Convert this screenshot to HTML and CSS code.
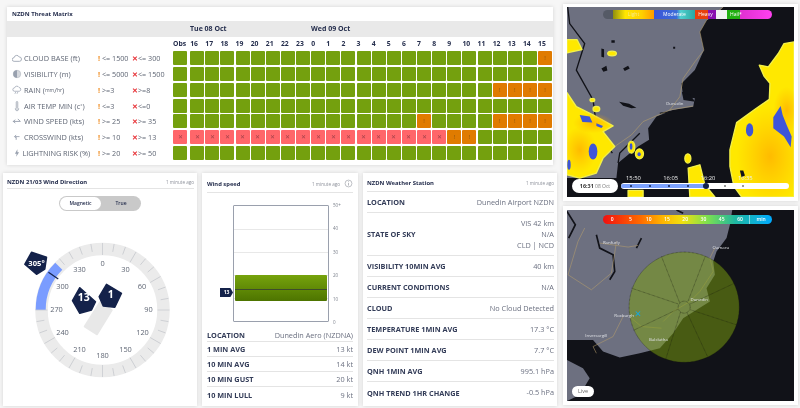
FILE: index.html
```html
<!DOCTYPE html>
<html lang="en">
<head>
<meta charset="utf-8">
<title>NZDN Dashboard</title>
<link rel="stylesheet" href="styles.css">
</head>
<body>
<div class="page">
  <div class="left">
    <section class="card threat">
      <h2 class="threat-title">NZDN Threat Matrix</h2>
      <div class="days"><span class="day-tue">Tue 08 Oct</span><span>Wed 09 Oct</span></div>
      <div class="matrix">
        <span class="h-blank"></span>
        <b>Obs</b><b>16</b><b>17</b><b>18</b><b>19</b><b>20</b><b>21</b><b>22</b><b>23</b><b>0</b><b>1</b><b>2</b><b>3</b><b>4</b><b>5</b><b>6</b><b>7</b><b>8</b><b>9</b><b>10</b><b>11</b><b>12</b><b>13</b><b>14</b><b>15</b>

        <span class="lbl"><svg class="ic" viewBox="0 0 12 12"><path d="M2.500 10a2.200 2.200 0 0 1 0-4.400A3.200 3.200 0 0 1 8.600 4.800 2.600 2.600 0 0 1 9 10z" fill="none" stroke="#98a0ae"/></svg>CLOUD BASE (ft)</span>
        <span class="w"><em>!</em> &lt;= 1500</span><span class="x"><em>✕</em>&lt;= 300</span>
        <i></i><i></i><i></i><i></i><i></i><i></i><i></i><i></i><i></i><i></i><i></i><i></i><i></i><i></i><i></i><i></i><i></i><i></i><i></i><i></i><i></i><i></i><i></i><i></i><i class="o">!</i>

        <span class="lbl"><svg class="ic" viewBox="0 0 12 12"><circle cx="6" cy="6" r="4.500" fill="#d5d8dd" stroke="#a8aeb8" stroke-width=".6"/><path d="M6 1.500a4.500 4.500 0 0 0 0 9z" fill="#98a0ae"/></svg>VISIBILITY (m)</span>
        <span class="w"><em>!</em> &lt;= 5000</span><span class="x"><em>✕</em>&lt;= 1500</span>
        <i></i><i></i><i></i><i></i><i></i><i></i><i></i><i></i><i></i><i></i><i></i><i></i><i></i><i></i><i></i><i></i><i></i><i></i><i></i><i></i><i></i><i></i><i></i><i></i><i></i>

        <span class="lbl"><svg class="ic" viewBox="0 0 12 12"><path d="M3 7.500a2 2 0 0 1 0-4A3 3 0 0 1 8.500 3a2.300 2.300 0 0 1 .3 4.500zM4.500 8.500l-1 2M7 8.500l-1 2" fill="none" stroke="#98a0ae" stroke-width=".9"/></svg>RAIN (<small>mm</small>/<small>hr</small>)</span>
        <span class="w"><em>!</em> &gt;=3</span><span class="x"><em>✕</em>&gt;=8</span>
        <i></i><i></i><i></i><i></i><i></i><i></i><i></i><i></i><i></i><i></i><i></i><i></i><i></i><i></i><i></i><i></i><i></i><i></i><i></i><i></i><i></i><i class="o">!</i><i class="o">!</i><i class="o">!</i><i class="o">!</i>

        <span class="lbl"><svg class="ic" viewBox="0 0 12 12"><path d="M5 1.500a1 1 0 0 1 2 0v6.500a2 2 0 1 1-2 0z" fill="#d5d8dd" stroke="#98a0ae" stroke-width=".7"/></svg>AIR TEMP MIN (c<sup>°</sup>)</span>
        <span class="w"><em>!</em> &lt;=3</span><span class="x"><em>✕</em>&lt;=0</span>
        <i></i><i></i><i></i><i></i><i></i><i></i><i></i><i></i><i></i><i></i><i></i><i></i><i></i><i></i><i></i><i></i><i></i><i></i><i></i><i></i><i></i><i></i><i></i><i></i><i></i>

        <span class="lbl"><svg class="ic" viewBox="0 0 12 12"><path d="M1 6.500h9M4 4.500 1.500 6.500 4 8.500M7 3.500l3 3" fill="none" stroke="#98a0ae" stroke-width="1.100"/></svg>WIND SPEED (kts)</span>
        <span class="w"><em>!</em> &gt;= 25</span><span class="x"><em>✕</em>&gt;= 35</span>
        <i></i><i></i><i></i><i></i><i></i><i></i><i></i><i></i><i></i><i></i><i></i><i></i><i></i><i></i><i></i><i></i><i class="o">!</i><i></i><i></i><i></i><i></i><i class="o">!</i><i class="o">!</i><i class="o">!</i><i class="o">!</i>

        <span class="lbl"><svg class="ic" viewBox="0 0 12 12"><path d="M3 5.500h6M5 3.500 3 5.500l2 2M5 5.500v4" fill="none" stroke="#98a0ae" stroke-width="1"/></svg>CROSSWIND (kts)</span>
        <span class="w"><em>!</em> &gt;= 10</span><span class="x"><em>✕</em>&gt;= 13</span>
        <i class="r">✕</i><i class="r">✕</i><i class="r">✕</i><i class="r">✕</i><i class="r">✕</i><i class="r">✕</i><i class="r">✕</i><i class="r">✕</i><i class="r">✕</i><i class="r">✕</i><i class="r">✕</i><i class="r">✕</i><i class="r">✕</i><i class="r">✕</i><i class="r">✕</i><i class="r">✕</i><i class="r">✕</i><i class="r">✕</i><i class="o">!</i><i class="o">!</i><i></i><i></i><i></i><i></i><i></i>

        <span class="lbl lbl-tight"><svg class="ic ic-tight" viewBox="0 0 12 12"><path d="M6.500 1.500 3.500 7h2l-.5 3.500L8.500 5h-2z" fill="#98a0ae"/></svg>LIGHTNING RISK (%)</span>
        <span class="w"><em>!</em> &gt;= 20</span><span class="x"><em>✕</em>&gt;= 50</span>
        <i></i><i></i><i></i><i></i><i></i><i></i><i></i><i></i><i></i><i></i><i></i><i></i><i></i><i></i><i></i><i></i><i></i><i></i><i></i><i></i><i></i><i></i><i></i><i></i><i></i>
      </div>
    </section>

    <div class="bottom">
      <section class="card dir">
        <header class="head"><h2>NZDN 21/03 Wind Direction</h2><span>1 minute ago</span></header>
        <div class="toggle"><span class="on">Magnetic</span><span class="off">True</span></div>
        <svg class="dial" viewBox="0 0 194 194" role="img" aria-label="Wind direction dial">
          <circle cx="97.500" cy="97" r="61" fill="none" stroke="#ebebeb" stroke-width="12.500"/>
          <path d="M35.700 97A61.800 61.800 0 0 1 53.800 53.300" fill="none" stroke="#7a9cff" stroke-width="10"/>
          <g stroke="#c9cbd0" stroke-width=".8">
            <line x1="97.500" y1="30" x2="97.500" y2="42"/>
            <line x1="97.500" y1="30" x2="97.500" y2="38" transform="rotate(10 97.500 97)"/>
            <line x1="97.500" y1="30" x2="97.500" y2="38" transform="rotate(20 97.500 97)"/>
            <line x1="97.500" y1="30" x2="97.500" y2="42" transform="rotate(30 97.500 97)"/>
            <line x1="97.500" y1="30" x2="97.500" y2="38" transform="rotate(40 97.500 97)"/>
            <line x1="97.500" y1="30" x2="97.500" y2="38" transform="rotate(50 97.500 97)"/>
            <line x1="97.500" y1="30" x2="97.500" y2="42" transform="rotate(60 97.500 97)"/>
            <line x1="97.500" y1="30" x2="97.500" y2="38" transform="rotate(70 97.500 97)"/>
            <line x1="97.500" y1="30" x2="97.500" y2="38" transform="rotate(80 97.500 97)"/>
            <line x1="97.500" y1="30" x2="97.500" y2="42" transform="rotate(90 97.500 97)"/>
            <line x1="97.500" y1="30" x2="97.500" y2="38" transform="rotate(100 97.500 97)"/>
            <line x1="97.500" y1="30" x2="97.500" y2="38" transform="rotate(110 97.500 97)"/>
            <line x1="97.500" y1="30" x2="97.500" y2="42" transform="rotate(120 97.500 97)"/>
            <line x1="97.500" y1="30" x2="97.500" y2="38" transform="rotate(130 97.500 97)"/>
            <line x1="97.500" y1="30" x2="97.500" y2="38" transform="rotate(140 97.500 97)"/>
            <line x1="97.500" y1="30" x2="97.500" y2="42" transform="rotate(150 97.500 97)"/>
            <line x1="97.500" y1="30" x2="97.500" y2="38" transform="rotate(160 97.500 97)"/>
            <line x1="97.500" y1="30" x2="97.500" y2="38" transform="rotate(170 97.500 97)"/>
            <line x1="97.500" y1="30" x2="97.500" y2="42" transform="rotate(180 97.500 97)"/>
            <line x1="97.500" y1="30" x2="97.500" y2="38" transform="rotate(190 97.500 97)"/>
            <line x1="97.500" y1="30" x2="97.500" y2="38" transform="rotate(200 97.500 97)"/>
            <line x1="97.500" y1="30" x2="97.500" y2="42" transform="rotate(210 97.500 97)"/>
            <line x1="97.500" y1="30" x2="97.500" y2="38" transform="rotate(220 97.500 97)"/>
            <line x1="97.500" y1="30" x2="97.500" y2="38" transform="rotate(230 97.500 97)"/>
            <line x1="97.500" y1="30" x2="97.500" y2="42" transform="rotate(240 97.500 97)"/>
            <line x1="97.500" y1="30" x2="97.500" y2="38" transform="rotate(250 97.500 97)"/>
            <line x1="97.500" y1="30" x2="97.500" y2="38" transform="rotate(260 97.500 97)"/>
            <line x1="97.500" y1="30" x2="97.500" y2="42" transform="rotate(270 97.500 97)"/>
            <line x1="97.500" y1="30" x2="97.500" y2="38" transform="rotate(320 97.500 97)"/>
            <line x1="97.500" y1="30" x2="97.500" y2="38" transform="rotate(330 97.500 97)"/>
            <line x1="97.500" y1="30" x2="97.500" y2="38" transform="rotate(340 97.500 97)"/>
            <line x1="97.500" y1="30" x2="97.500" y2="38" transform="rotate(350 97.500 97)"/>
          </g>
          <line x1="97.500" y1="31" x2="97.500" y2="43" stroke="#14224a" stroke-width="1.200" transform="rotate(305 97.500 97)"/>
          <g class="dial-num" text-anchor="middle">
            <text x="97.500" y="53">0</text><text x="120.500" y="59">30</text><text x="137" y="76">60</text><text x="143.500" y="99">90</text>
            <text x="137.500" y="122">120</text><text x="120.500" y="139">150</text><text x="97.500" y="144.500">180</text><text x="74.500" y="139">210</text>
            <text x="57.500" y="122">240</text><text x="51.500" y="99">270</text><text x="57.500" y="76">300</text><text x="74.500" y="59">330</text>
          </g>
          <path d="M79.500 113.500 92 121.500 107 97 95 89z" fill="#e8e8e8" stroke="#e8e8e8" stroke-width="1.500" stroke-linejoin="round"/>
          <path class="badge" d="M101.500 71.300 116.500 80.300 109.800 94.300 98.200 93 94.200 83.700z"/>
          <path class="badge" d="M74.800 74.700 90.500 88.700 86.500 97 74.800 100.300 67.500 87.700z"/>
          <path class="badge" d="M26.500 39.300 41.500 44.300 39.800 56 31.500 61.300 19.800 51.300z"/>
          <text class="dial-b" x="105.800" y="85" text-anchor="middle">1</text>
          <text class="dial-b" x="78.800" y="88" text-anchor="middle">13</text>
          <text class="dial-c" x="31.500" y="52.500" text-anchor="middle">305°</text>
        </svg>
      </section>

      <section class="card speed">
        <header class="head head-s"><h2>Wind speed</h2><span>1 minute ago<svg class="info" viewBox="0 0 10 10"><circle cx="5" cy="5" r="3.800" fill="none" stroke="#9a9ea6" stroke-width=".7"/><path d="M5 4.300v3M5 2.600v.8" stroke="#9a9ea6" stroke-width=".8"/></svg></span></header>
        <div class="chart">
          <div class="plot">
            <span class="grid g1"></span><span class="grid g2"></span><span class="grid g3"></span><span class="grid g4"></span>
            <div class="band"><span class="avg"></span></div>
            <span class="flag">13</span>
          </div>
          <div class="scale"><span>50+</span><span>40</span><span>30</span><span>20</span><span>10</span><span>0</span></div>
        </div>
        <dl class="rows rows-s">
          <div><dt>LOCATION</dt><dd>Dunedin Aero (NZDNA)</dd></div>
          <div><dt>1 MIN AVG</dt><dd>13 kt</dd></div>
          <div><dt>10 MIN AVG</dt><dd>14 kt</dd></div>
          <div><dt>10 MIN GUST</dt><dd>20 kt</dd></div>
          <div><dt>10 MIN LULL</dt><dd>9 kt</dd></div>
        </dl>
      </section>

      <section class="card station">
        <header class="head head-w"><h2>NZDN Weather Station</h2><span>1 minute ago</span></header>
        <dl class="rows rows-w">
          <div><dt>LOCATION</dt><dd>Dunedin Airport NZDN</dd></div>
          <div class="tall"><dt>STATE OF SKY</dt><dd>VIS 42 km<br>N/A<br>CLD | NCD</dd></div>
          <div><dt>VISIBILITY 10MIN AVG</dt><dd>40 km</dd></div>
          <div><dt>CURRENT CONDITIONS</dt><dd>N/A</dd></div>
          <div><dt>CLOUD</dt><dd>No Cloud Detected</dd></div>
          <div><dt>TEMPERATURE 1MIN AVG</dt><dd>17.3 °C</dd></div>
          <div><dt>DEW POINT 1MIN AVG</dt><dd>7.7 °C</dd></div>
          <div><dt>QNH 1MIN AVG</dt><dd>995.1 hPa</dd></div>
          <div><dt>QNH TREND 1HR CHANGE</dt><dd>-0.5 hPa</dd></div>
        </dl>
      </section>
    </div>
  </div>

  <div class="maps">
    <section class="card map map-a">
      <svg class="map-svg" viewBox="22 20 680 572" preserveAspectRatio="none" aria-hidden="true">
        <defs>
          <radialGradient id="amber"><stop offset="0" stop-color="#ffa800" stop-opacity=".7"/><stop offset="1" stop-color="#ffb000" stop-opacity="0"/></radialGradient>
        </defs>
        <rect x="22" y="20" width="680" height="572" fill="#111218"/>
        <path d="M22 20H490L470 40 440 60 420 95 432 150 405 210 365 250 370 290 405 295 400 320 340 330 290 350 265 385 268 420 235 440 175 490 170 535 22 535z" fill="#6d7080"/>
        <path d="M24 20l6 50 45 60-25 80 50 90 8 60 20 60 30 40M30 400l40-40M175 490l5-30 60-60M300 340l60-10" fill="none" stroke="#111218" stroke-width="4"/>
        <path d="M178 305l30 6 22 12-15 2-25-8zM125 205l15-8 3 14-12 4zM190 205l15-8 5 8-15 8zM125 145l8 2v25l-8-2zM155 120h10v8h-10zM340 140h6v6h-6zM366 275l25 10 15 20-35-5z" fill="#111218"/>
        <path d="M490 20 440 60 420 95 432 150 405 185 370 235 360 290 330 330 250 365 215 405 165 440 60 450M330 330l70-12M165 440l-10 10" fill="none" stroke="#b79f6b" stroke-width="2" opacity=".85"/>

        <g class="radar-edge">
          <path d="M702 125 672 130 655 160 625 200 598 195 612 228 630 250 628 298 585 328 530 368 510 450 510 500 522 560 545 592H702z"/>
          <path d="M22 278 50 320 100 345 160 378 130 395 165 440 130 475 110 520 60 535 22 525z"/>
          <path d="M22 118h30l15 30-45 10z"/>
          <ellipse cx="157" cy="160" rx="13" ry="7"/>
          <ellipse cx="215" cy="442" rx="10" ry="18"/>
          <ellipse cx="239" cy="462" rx="12" ry="15"/>
          <ellipse cx="384" cy="476" rx="9" ry="14"/>
          <path d="M385 505l35-10 15 60 30 37H390z"/>
          <path d="M205 572h45v20h-45z"/>
          <ellipse cx="98" cy="300" rx="7" ry="5"/>
          <ellipse cx="110" cy="327" rx="10" ry="8"/>
        </g>
        <ellipse cx="630" cy="470" rx="100" ry="150" fill="url(#amber)"/>
        <ellipse cx="680" cy="330" rx="40" ry="70" fill="url(#amber)"/>
        <ellipse cx="60" cy="450" rx="50" ry="70" fill="url(#amber)"/>
        <ellipse cx="100" cy="370" rx="60" ry="30" fill="url(#amber)"/>
        <path d="M540 512h10l5 15-10 6z" fill="#111218"/>
        <path d="M640 352 662 318 668 345 680 375 695 410 692 442 672 410 640 385z" fill="#3e55d8"/>
        <ellipse cx="569" cy="390" rx="11" ry="20" fill="#3e55d8"/>
        <path d="M60 345l30 5 8 18-30-2zM110 370l20 8-5 6-15-6z" fill="#3e55d8"/>
        <ellipse cx="100" cy="455" rx="13" ry="24" fill="#3e55d8"/>
        <ellipse cx="28" cy="495" rx="5" ry="15" fill="#3e55d8"/>
        <ellipse cx="214" cy="440" rx="4" ry="10" fill="#3e55d8"/>
        <ellipse cx="238" cy="463" rx="5" ry="6" fill="#3e55d8"/>
        <text x="345" y="315" class="town" text-anchor="middle">Dunedin</text>
      </svg>
      <div class="legend rain">
        <span class="seg s0"></span><span class="seg s1">Light</span><span class="seg s2">Moderate</span><span class="seg s3">Heavy</span><span class="seg s4"></span><span class="seg s5">Hail*</span>
      </div>
      <div class="timeline">
        <div class="stamp"><b>16:31</b> 08 Oct</div>
        <div class="track-wrap">
          <div class="ticks"><span>15:50</span><span>16:05</span><span>16:20</span><span>16:35</span></div>
          <div class="track"><span class="fill"></span><span class="dot d1"></span><span class="dot d2"></span><span class="dot d3"></span><span class="dot d4"></span><span class="dot d5"></span><span class="dot d6"></span><span class="knob"></span></div>
        </div>
      </div>
    </section>

    <section class="card map map-b">
      <svg class="map-svg" viewBox="22 16 680 572" preserveAspectRatio="none" aria-hidden="true">
        <rect x="22" y="16" width="680" height="572" fill="#111218"/>
        <path d="M22 16H517L510 60 500 100 470 140 460 170 465 210 440 250 450 290 370 340 340 385 300 430 240 445 180 458 130 440 100 405 22 405z" fill="#6d7080"/>
        <path d="M22 465 70 490 90 520 60 570 22 588z" fill="#6d7080"/>
        <path d="M22 20l25 40-20 40M110 90l10 40 40 20 5 50-15 25M230 130l15-30M350 16l20 10" fill="none" stroke="#111218" stroke-width="5"/>
        <path d="M75 70l-20 40-30 100 70 45 60-50 10-60 5-35M120 115l85 12 30-5M465 130l-15 30 10 40-40 60-30 30-50 30-30 30M190 335l-30 60-60 30 10 20M215 340l30 25 60 5" fill="none" stroke="#b79f6b" stroke-width="2" opacity=".8"/>
        <g fill="#7aa010" fill-opacity=".52" stroke="#15180c" stroke-width="1.600" stroke-dasharray="2 2">
          <circle cx="373" cy="307" r="165"/>
          <path d="M360 295 305 155M385 288 436 155M392 297 520 237M392 315 530 360M382 324 443 455M362 322 318 462M354 313 222 376M354 297 215 250" fill="none"/>
          <circle cx="373" cy="307" r="18" fill="none"/>
        </g>
        <g class="town" text-anchor="middle">
          <text x="155" y="118">Ranfurly</text><text x="483" y="132">Oamaru</text><text x="418" y="288">Dunedin</text><text x="193" y="335">Roxburgh</text><text x="296" y="408">Balclutha</text><text x="110" y="396">Invercargill</text>
        </g>
        <path d="M228 320l13 13M241 320l-13 13" stroke="#19a7d8" stroke-width="3"/>
      </svg>
      <div class="legend scale-min"><span>0</span><span>5</span><span>10</span><span>15</span><span>20</span><span>30</span><span>45</span><span>60</span><span class="min">min</span></div>
      <span class="live">Live</span>
    </section>
  </div>
</div>
</body>
</html>
```

FILE: styles.css
```css
* { box-sizing: border-box; }
html, body { margin: 0; padding: 0; }
body { font-family: "Open Sans", "Noto Sans", sans-serif; color: #252e4d; background: #f6f6f6; }
.page { display: flex; width: 800px; height: 408px; overflow: hidden; background: #f6f6f6; filter: blur(.35px); }
.left { width: 563px; flex: none; }
.card { background: #fff; box-shadow: 0 0 4px rgba(0, 0, 0, .14); }
h2 { margin: 0; font-size: 6px; font-weight: 700; color: #252e4d; }

/* threat matrix */
.threat { margin: 7px 0 0 7px; width: 546px; height: 158px; }
.threat-title { padding: 3px 0 0 5px; height: 14px; line-height: 9px; }
.days { display: flex; height: 16px; background: #e9e9e9; font-size: 7px; font-weight: 700; line-height: 16px; padding-left: 183px; }
.day-tue { width: 121px; }
.matrix { display: grid; grid-template-columns: 86px 34px 41px 17.2px repeat(24, 15.13px); grid-template-rows: 14px repeat(7, 15.85px); padding-left: 5px; }
.h-blank { grid-column: span 3; }
.matrix b { font-size: 6.8px; line-height: 14px; font-weight: 700; white-space: nowrap; }
.matrix i { display: block; width: 14px; height: 14px; border-radius: 1px; background: #74a00e; font-style: normal; font-size: 6px; line-height: 14px; text-align: center; }
.matrix i.o { background: #e07b00; color: #8a5510; }
.matrix i.r { background: #ff666a; color: #a0424a; }
.lbl { display: flex; align-items: center; height: 14px; font-size: 7.4px; color: #5f6674; white-space: nowrap; }
.lbl small { font-size: 5px; }
.lbl sup { font-size: 5px; line-height: 0; }
.lbl-tight { letter-spacing: -.01em; }
.ic { width: 10px; height: 12px; margin-right: 2px; flex: none; }
.ic-tight { margin-right: .5px; }
.w, .x { display: block; height: 14px; font-size: 7.2px; line-height: 14px; color: #5f6674; white-space: nowrap; }
.w em { color: #ef8a1d; font-style: normal; font-weight: 700; }
.x em { color: #e8363b; font-style: normal; font-weight: 700; }

/* bottom row */
.bottom { display: flex; gap: 5px; margin-top: 8px; padding-left: 3px; height: 233px; }
.head { display: flex; justify-content: space-between; align-items: center; height: 17px; margin: 0 4px; padding-top: 2px; border-bottom: 1px solid #e4e4e4; }
.head span { display: flex; align-items: center; font-size: 4.6px; color: #8c909a; }
.dir { width: 194px; height: 233px; }
.dir .head { margin: 0 3px 0 4px; height: 16px; }
.dir h2 { font-size: 5.9px; }
.toggle { display: flex; width: 82px; height: 15px; margin: 7px auto 0; border-radius: 8px; background: #c9c9c9; font-size: 5px; line-height: 13px; font-weight: 600; }
.toggle span { display: block; text-align: center; }
.toggle .on { width: 41px; margin: 1px 0 1px 1px; border-radius: 7px; background: #fff; }
.toggle .off { flex: 1; line-height: 15px; }
.dial { display: block; width: 194px; height: 194px; margin: 2px 0 0 2px; }
.dial-num { font-size: 7.4px; fill: #5f6674; }
.dial-b { font-size: 10.500px; font-weight: 700; fill: #fff; }
.dial-c { font-size: 7.6px; font-weight: 700; fill: #fff; }
.badge { fill: #14224a; stroke: #14224a; stroke-width: 1.500; stroke-linejoin: round; }

.speed { width: 156px; height: 233px; }
.speed .head { height: 20px; margin: 0 5px 0 5px; }
.speed h2 { font-size: 5.8px; }
.info { width: 9px; height: 9px; margin-left: 4px; }
.chart { display: flex; height: 117px; margin: 12px 0 0 31px; }
.plot { position: relative; width: 96px; height: 117px; border: 1px solid #9aa0ad; border-radius: 1px; }
.grid { position: absolute; left: 0; right: 0; height: 1px; background: #e8e8e8; }
.g1 { top: 23px; } .g2 { top: 46px; } .g3 { top: 69px; } .g4 { top: 92px; }
.band { position: absolute; left: 1px; right: 1px; top: 69px; height: 26px; border-radius: 1px; background: linear-gradient(#76a30c, #4d7400); }
.avg { position: absolute; left: 0; right: 0; top: 14px; height: 1px; background: #3e4d2a; }
.flag { position: absolute; left: -14px; top: 82px; width: 13px; height: 9px; background: #14224a; color: #fff; font-size: 5px; font-weight: 700; line-height: 9px; text-align: center; clip-path: polygon(0 0, 80% 0, 100% 50%, 80% 100%, 0 100%); }
.scale { display: flex; flex-direction: column; justify-content: space-between; height: 123px; margin: -3px 0 0 4px; font-size: 4.5px; line-height: 6px; color: #7c818c; }

dl { margin: 0; }
.rows div { display: flex; justify-content: space-between; align-items: center; border-bottom: 1px solid #e4e4e4; }
.rows div:last-child { border-bottom: 0; }
dt { font-size: 7.3px; font-weight: 700; color: #333c58; }
dd { margin: 0; font-size: 7.3px; color: #6b7080; text-align: right; }
.rows-s { margin: 6px 5px 0 5px; }
.rows-s div { height: 15px; }
.rows-s div:first-child { height: 14px; }

.station { width: 194px; height: 233px; }
.station .head { height: 19px; margin: 0 3px 0 4px; }
.station h2 { font-size: 5.9px; }
.rows-w { margin: 0 3px 0 4px; }
.rows-w div { height: 21px; }
.rows-w div.tall { height: 43px; }
.rows-w dd { line-height: 11px; }

/* maps */
.maps { display: flex; flex-direction: column; gap: 5px; width: 235px; padding-top: 4px; }
.map { position: relative; width: 235px; height: 197px; padding: 3px 4px 4px; }
.map-b { height: 199px; padding-top: 4px; padding-bottom: 4px; }
.map-svg { display: block; width: 227px; height: 190px; }
.map-b .map-svg { height: 191px; }
.radar-edge path, .radar-edge ellipse { fill: #ffe800; stroke: #f2f04a; stroke-width: 4; stroke-linejoin: round; }
.town { font-size: 13px; fill: #e0e2e6; font-family: "Open Sans", sans-serif; }
.legend { position: absolute; left: 40px; width: 169px; height: 9px; display: flex; border-radius: 5px; overflow: hidden; font-size: 5px; line-height: 9px; color: #fff; }
.rain { top: 6px; }
.seg { display: block; text-align: center; }
.s0 { width: 10px; background: #555a66; }
.s1 { width: 41px; background: linear-gradient(90deg, #8f8f10, #ffe600 30%, #ffd000 70%, #ff9a00); color: #f6e98a; }
.s2 { width: 41px; background: linear-gradient(90deg, #3c55d8, #3c6cd8 55%, #4fd0d0 65%, #2aa8a0); }
.s3 { width: 21px; background: linear-gradient(90deg, #e8400a 60%, #8a10b0 60%); }
.s4 { width: 11px; background: #f2f2f2; }
.s5 { flex: 1; text-align: left; padding-left: 3px; background: linear-gradient(90deg, #22b012 30%, #e030d0 30%, #ff40f0); }
.timeline { position: absolute; left: 9px; right: 9px; bottom: 8px; display: flex; align-items: center; gap: 3px; }
.stamp { width: 46px; height: 14px; flex: none; border-radius: 7px; background: #fff; font-size: 5px; line-height: 14px; text-align: center; color: #777; }
.stamp b { color: #333; font-size: 5.4px; }
.track-wrap { position: relative; flex: 1; height: 6px; }
.ticks { position: absolute; left: 5px; top: -9px; display: flex; font-size: 5.800px; line-height: 8px; color: #eee; }
.ticks span { display: block; width: 37.300px; }
.track { position: relative; height: 6px; border-radius: 3px; background: #fff; }
.fill { position: absolute; left: 0; top: 1px; bottom: 1px; width: 85px; border-radius: 2px; background: #7ca2ff; }
.dot { position: absolute; top: 2px; width: 2px; height: 2px; border-radius: 50%; background: #14224a; }
.d1 { left: 9px; } .d2 { left: 28px; } .d3 { left: 47px; } .d4 { left: 66px; } .d5 { left: 103px; background: #777; } .d6 { left: 121px; background: #777; }
.knob { position: absolute; left: 82px; top: 0; width: 6px; height: 6px; border-radius: 50%; background: #14224a; }
.scale-min { top: 9px; background: linear-gradient(90deg, #f01010, #ff6a00 22%, #ffb400 35%, #f0e010 47%, #7ce050 62%, #20b8a0 78%, #00aaff); font-size: 5px; font-weight: 600; }
.scale-min span { display: block; flex: 1; text-align: center; }
.scale-min .min { flex: 1.200; border-left: 1px solid rgba(255, 255, 255, .5); }
.live { position: absolute; left: 9px; bottom: 8px; width: 22px; height: 11px; border-radius: 6px; background: #fff; font-size: 5.400px; line-height: 11px; text-align: center; color: #666; }
```
